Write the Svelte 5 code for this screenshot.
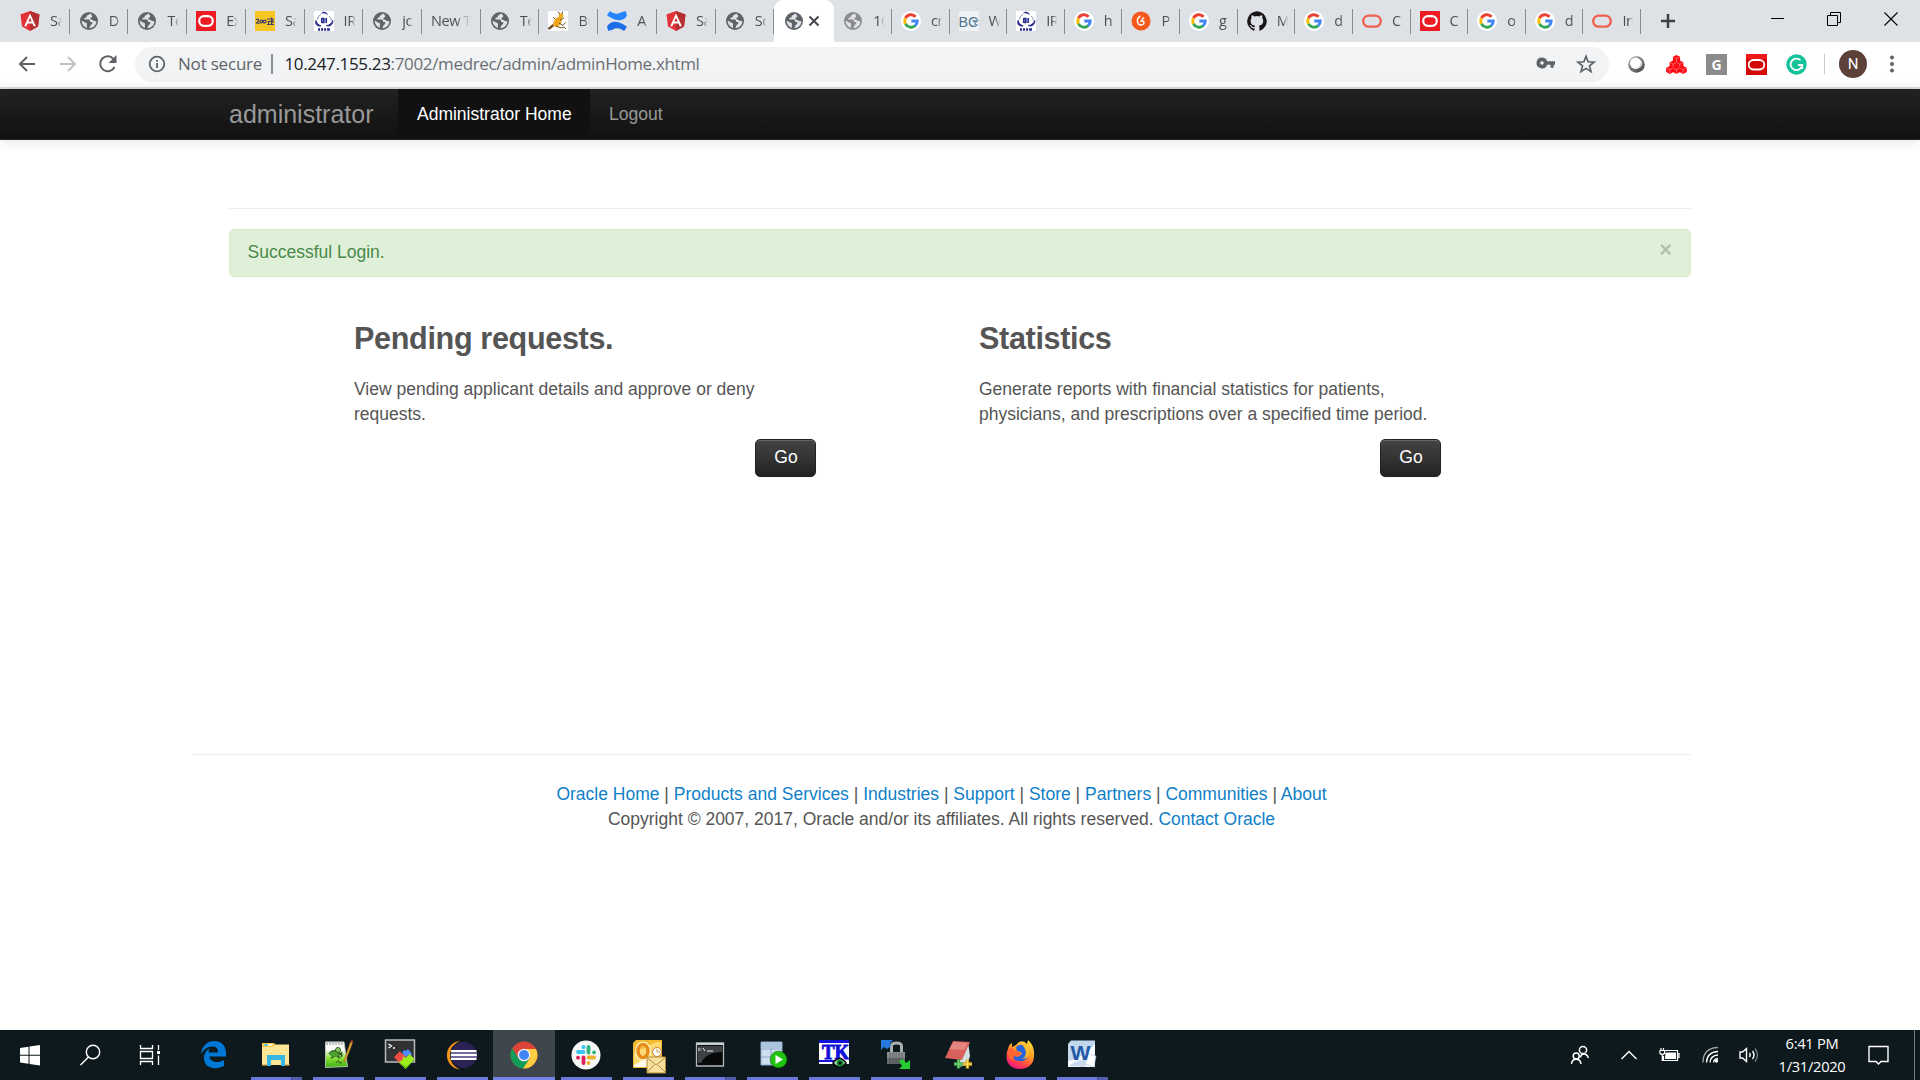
<script>
  const tabs = [
    { icon: 'angular', text: 'Sa' },
    { icon: 'globe', text: 'D' },
    { icon: 'globe', text: 'Te' },
    { icon: 'oracle', text: 'Ex' },
    { icon: 'yellow', text: 'Sa' },
    { icon: 'irctc', text: 'IR' },
    { icon: 'globe', text: 'jc' },
    { icon: '', text: 'New T' },
    { icon: 'globe', text: 'Te' },
    { icon: 'bug', text: 'Bu' },
    { icon: 'confluence', text: 'A' },
    { icon: 'angular', text: 'Sa' },
    { icon: 'globe', text: 'So' }
  ];
  const laterTabs = [
    { icon: 'globeLight', text: '10' },
    { icon: 'google', text: 'cr' },
    { icon: 'bc', text: 'W' },
    { icon: 'irctc', text: 'IR' },
    { icon: 'google', text: 'h' },
    { icon: 'orange', text: 'P' },
    { icon: 'google', text: 'g' },
    { icon: 'github', text: 'M' },
    { icon: 'google', text: 'd' },
    { icon: 'oval', text: 'C' },
    { icon: 'oracle', text: 'C' },
    { icon: 'google', text: 'o' },
    { icon: 'google', text: 'd' },
    { icon: 'oval', text: 'In' }
  ];
  const apps = [
    { icon: 'edge', run: '' },
    { icon: 'explorer', run: 'multi' },
    { icon: 'npp', run: 'one' },
    { icon: 'moba', run: 'one' },
    { icon: 'eclipse', run: 'one' },
    { icon: 'chrome', run: 'active' },
    { icon: 'slack', run: 'one' },
    { icon: 'outlook', run: 'one' },
    { icon: 'cmd', run: 'multi' },
    { icon: 'sqldev', run: 'one' },
    { icon: 'tk', run: 'one' },
    { icon: 'winscp', run: 'one' },
    { icon: 'notes', run: 'one' },
    { icon: 'firefox', run: 'one' },
    { icon: 'word', run: 'multi' }
  ];
  const links = ['Oracle Home', 'Products and Services', 'Industries', 'Support', 'Store', 'Partners', 'Communities', 'About'];
  const cubes = [[10.5, 1], [7.2, 6.4], [13.8, 6.4], [3.8, 12], [10.5, 12], [17.2, 12]];
</script>

{#snippet globe(color)}
  <circle cx="10" cy="10" r="9" fill={color} />
  <path d="M10.800 2.600c-.3 1.500-1.700 1.300-2.600 1.900-.8.500-.2 1.600-1 2-.7.400-1.500.2-1.900.9-.3.700.4 1.200 1.100 1.200h3.300c1 0 1.300.9 1.300 1.700 0 .9.900.6 1.700.8.900.3.800 1.200.2 1.800-.5.600-1.400.9-1.600 1.900-.2.900-.5 1.800-1.300 2.400 4.100 0 7.300-3.100 7.400-7l-2.200-.1c-.6-.1-.9-.9-1.500-1.200-.7-.3-1.900-.1-2.300-.9-.4-.9.600-1.400 1.300-1.800.6-.3.600-1.300.2-2-.6-.9-1.300-1.300-2.100-1.600zM2.700 9.700c0 3.200 2.100 6.100 5.200 7.100.4-.7-.2-1.600-.1-2.400.1-.8.500-1.400.1-2-.6-.9-1.600-.8-2.400-1.200-.8-.5-1.500-1.300-2.800-1.500z" fill="#dee1e6" />
{/snippet}

{#snippet favicon(name)}
  <svg class="favicon" viewBox="0 0 20 20" width="20" height="20">
    {#if name === 'angular'}
      <path d="M10 0 19.500 3.400 18 15.500 10 20 2 15.500.5 3.400z" fill="#e23237" />
      <path d="M10 0 19.500 3.400 18 15.500 10 20z" fill="#b52e31" />
      <path d="M10 2.500 4.200 15.300h2.200l1.200-2.900h4.900l1.200 2.900h2.200zM10 6.700l1.700 3.900H8.300z" fill="#fff" fill-rule="evenodd" />
    {:else if name === 'globe'}
      {@render globe('#5f6368')}
    {:else if name === 'globeLight'}
      {@render globe('#8b8b8b')}
    {:else if name === 'oracle'}
      <rect width="20" height="20" fill="#ed1c24" />
      <rect x="3.200" y="5.200" width="13.600" height="9.600" rx="4.800" fill="none" stroke="#fff" stroke-width="2.200" />
    {:else if name === 'yellow'}
      <rect width="20" height="20" fill="#f6c624" />
      <g fill="none" stroke="#45426a" stroke-width="1.200"><path d="M1 8.500q2.500-1 2.500.5T1.500 12q2 1 3-.5" /><circle cx="6.300" cy="10.500" r="1.400" /><circle cx="9.600" cy="10.500" r="1.400" /><path d="M12 8h6.500M12.500 10.500h5M12 13.500h7M13.500 10.500v3M16.500 6.500v7M18 8v4" /></g>
    {:else if name === 'irctc'}
      <rect width="20" height="20" fill="#fff" />
      <path d="M7 2.500C8.500-.3 13.500 0 13.700 4.500 12.300 2.500 10 1.800 7 2.500z" fill="#2b2e8c" />
      <path d="M2 9.500C.8 13.500 3.500 15.800 7 14.800 4.500 14 2.700 12.300 2 9.500zM18.800 9.500c.3 4.500-3.300 6.500-6.500 5 3 0 5.300-2 6.500-5z" fill="#2b2e8c" stroke="#2b2e8c" />
      <g fill="none" stroke="#2b2e8c"><path d="M7 3.500Q3.800 4.500 3.500 8.500M15 5q2.300 1.500 2.300 4.500" stroke="#8a90bd" /><path d="M7.800 7v5M8 7.500h1.800v4H8M12.200 7v5" stroke-width="1.700" /><path d="M4 18.500h2m1 0h2m1 0h2m1 0h3" stroke-width="2.500" /></g>
    {:else if name === 'bug'}
      <rect width="20" height="20" fill="#fff" />
      <path d="m.5 18 5-4" stroke="#6e4a1f" stroke-width="2.300" /><ellipse cx="9.500" cy="11" rx="3.600" ry="5.500" transform="rotate(35 9.500 11)" fill="#f0a51a" /><circle cx="13" cy="5" r="2.400" fill="#eda91c" /><path d="M12 3 10 .5M14 3l.5-2.500M12 9l4-2M11 12l4 2.500 2.500-3M7 8 5 6M8 15l5 2 3-1M16 16l2 2" stroke="#6d5325" stroke-width="1" fill="none" />
    {:else if name === 'confluence'}
      <path d="M0 4.300 2.500.5Q3 .1 3.700.5 9 4.500 14.500 1.300L18 .3Q18.800.1 19 .8L20 4.500Q17.500 9.300 11.500 9.300 6 9 0 4.300z" fill="#2684ff" /><path d="M20 15.700l-2.500 3.800q-.5.400-1.200 0Q11 15.500 5.500 18.700L2 19.700q-.8.200-1-.5L0 15.500q2.500-4.800 8.500-4.800 5.500.3 11.500 5z" fill="#1b6ee6" />
    {:else if name === 'google'}
      <circle cx="10" cy="10" r="10" fill="#fff" />
      <g fill="none" stroke-width="3"><path d="M14.600 5.700A6.200 6.200 0 0 0 4.500 7.100" stroke="#ea4335" /><path d="M4.500 7.100a6.200 6.200 0 0 0 0 5.800" stroke="#fbbc05" /><path d="M4.500 12.900a6.200 6.200 0 0 0 9.700 1.700" stroke="#34a853" /><path d="M14.200 14.600A6.200 6.200 0 0 0 16.200 10H10.300" stroke="#4285f4" /></g>
    {:else if name === 'bc'}
      <rect width="20" height="20" fill="#eef2f5" />
      <text x="-.5" y="15.500" class="bc" textLength="20" lengthAdjust="spacingAndGlyphs">BC</text><path d="M13 9h7l-2 2.500h-1V14h-1.500v-2.500h-1z" fill="#7b98ac" />
    {:else if name === 'orange'}
      <circle cx="10" cy="10" r="9.500" fill="#f4581c" />
      <path d="M9.500 5C6 6.500 5.500 11 7.500 13s5.500.8 5.500-1.300-3-2.700-3.500-.7M10.500 8.500l2.700-1.800" stroke="#fff" stroke-width="1.500" fill="none" />
    {:else if name === 'github'}
      <path d="M10 .3a10 10 0 0 0-3.200 19.400c.5.100.7-.2.700-.5v-1.900c-2.800.6-3.400-1.200-3.400-1.200-.4-1.100-1.100-1.400-1.100-1.400-.9-.6.100-.6.100-.6 1 .1 1.500 1 1.500 1 .9 1.600 2.400 1.100 2.900.9.100-.7.400-1.100.6-1.400-2.200-.2-4.500-1.100-4.500-4.900 0-1.100.4-2 1-2.700-.1-.2-.4-1.200.1-2.600 0 0 .8-.3 2.700 1a9 9 0 0 1 5 0c1.900-1.300 2.700-1 2.700-1 .5 1.400.2 2.400.1 2.600.6.700 1 1.600 1 2.700 0 3.800-2.300 4.700-4.500 4.900.4.300.7.900.7 1.900v2.700c0 .3.200.6.700.5A10 10 0 0 0 10 .3z" fill="#171515" />
    {:else if name === 'oval'}
      <rect x="1.200" y="4.700" width="17.600" height="11" rx="5.500" fill="none" stroke="#f0624f" stroke-width="2.300" />
    {/if}
  </svg>
{/snippet}

{#snippet appIcon(name)}
  <svg class="app-icon" viewBox="0 0 32 32" width="32" height="32">
    {#if name === 'edge'}
      <path d="M3 15C4 6 10 2 16.500 2 24 2 28 7.500 28 14v3.500H11.500c.2 5.500 8.500 7.300 14.500 3.500v6c-9 4.500-20 2-20-8 0-4.500 2.500-8 6-9.500-1 1.300-1.400 2.500-1.500 4H20c0-3-1-6-5.500-6C9.500 7.500 5.500 10.500 3 15z" fill="#0078d7" />
    {:else if name === 'explorer'}
      <path d="M2 4h12l1.500 2L13 9H2z" fill="#f8c944" /><path d="M4.500 5h8v2h-8z" fill="#fff6d8" /><path d="M4.500 5h3v2h-3z" fill="#3db5e7" /><path d="M2 8h11l2-2.500h14V26H2z" fill="#ffe694" /><path d="M7 16h18v11h-4v-6H11v6H7z" fill="#38b6e8" /><path d="M2 25h5v1.500H2zm23 0h4.500v1.500H25z" fill="#e9c761" />
    {:else if name === 'npp'}
      <defs><linearGradient id="grass" x2="0" y2="1"><stop offset=".3" stop-color="#fafbf7" /><stop offset=".65" stop-color="#84dd32" /><stop offset="1" stop-color="#3eae18" /></linearGradient></defs>
      <path d="M3.500 3h18.500l3.500 24.500-22 1z" fill="url(#grass)" stroke="#ccd8c5" stroke-width=".8" /><path d="M5 2v4m3-4v4m3-4v4m3-4v4m3-4v4m3-4v4" stroke="#a1a1a1" stroke-width="1.300" /><path d="M7 15q4-5 8-2t5 0M8 14q2 4 8 2t3 2M9 19l5-3 4 3" fill="none" stroke="#315c24" stroke-width="1.600" /><ellipse cx="12" cy="15" rx="4.500" ry="2.500" fill="#48a42e" /><circle cx="16" cy="11" r="2.500" fill="#89cd5a" stroke="#315c24" /><path d="M14 24c2-3 3-3 3-1s2 0 3 1" stroke="#29571c" fill="none" /><path d="m21.500 23 7-20 2 1-7 18z" fill="#f2b02e" stroke="#895b1e" stroke-width=".5" /><path d="m28.500 3 .7-2 2 .7-.7 2.300z" fill="#b53a2c" />
    {:else if name === 'moba'}
      <path d="M1.500 1h29v22h-29z" fill="#303234" stroke="#b9bcbd" stroke-width="1.500" /><path d="m4.500 5 3 2-3 2M9 9h2" fill="none" stroke="#fff" stroke-width="1.300" /><path d="m10 18 6-6 2 3 3-1 2 3-3 3 2 3-5 3z" fill="#ee4b43" /><path d="m18 14 2-3 2 1 2-2 4 5-1 2-3-1-2 2-2-2z" fill="#4c8cff" /><path d="m14.500 23 4-2 1-4 2 2 4-4 5 5-9 10z" fill="#9cee1b" /><path d="m14 22 8 8 8-9-8 7z" fill="#54b313" />
    {:else if name === 'eclipse'}
      <path d="M14 2A14.300 14.300 0 0 0 14 30.500Q4 26 4 16T14 2z" fill="#f7941e" /><circle cx="17.700" cy="16" r="13" fill="#2c2255" /><path d="M5 12h25.500M4.800 16h26M5 20h25.500" stroke="#fff" stroke-width="2" /><path d="M5 14h26M5 18h26" stroke="#8e82b8" stroke-width="1.500" />
    {:else if name === 'chrome'}
      <circle cx="16" cy="16" r="13.500" fill="#db4437" /><path d="M4.300 9.250A13.500 13.500 0 0 0 16 29.500L21.700 19.500 10.500 19.500z" fill="#0f9d58" /><path d="M28 10A13.500 13.500 0 0 1 15 29.500L21.700 19.500 16 10z" fill="#ffcd40" /><circle cx="16" cy="16" r="6.300" fill="#f1f1f1" /><circle cx="16" cy="16" r="5" fill="#4285f4" />
    {:else if name === 'slack'}
      <circle cx="16" cy="16" r="14.500" fill="#f6f6f6" /><g fill="none" stroke-width="3.800" stroke-linecap="round"><path d="M8 13h5.500" stroke="#36c5f0" /><path d="M13.500 8v.2" stroke="#36c5f0" /><path d="M18.500 8v5.500M24 13.300h.1" stroke="#2eb67d" /><path d="M18.500 18.500H24M18.500 24v.1" stroke="#ecb22e" /><path d="M13.500 18.500V24M8 18.700h.1" stroke="#e01e5a" /></g>
    {:else if name === 'outlook'}
      <path d="M1 4 4 1h26v28H1z" fill="#f5b930" /><path d="M2 14 24 3h5v23H2z" fill="#fbda72" /><path d="M2 26 13 20h5v8H2z" fill="#fffaf0" /><ellipse cx="11" cy="12" rx="5.500" ry="7" fill="none" stroke="#fff5cb" stroke-width="5" /><ellipse cx="11" cy="12" rx="5" ry="6.500" fill="none" stroke="#e78a16" stroke-width="3.500" /><circle cx="25" cy="13" r="4.500" fill="#fff" stroke="#d47b35" /><path d="M25 10v3h3" fill="none" stroke="#c93" /><path d="M15 18h18.500v16H15z" fill="#f7df9c" stroke="#b28b36" /><path d="m15.500 19 8.700 7 8.700-7M15.500 33l6.500-7m11 7-7-7" fill="none" stroke="#b28b36" />
    {:else if name === 'cmd'}
      <path d="M2.500 4h27v23h-27z" fill="#080909" stroke="#b2b8bb" stroke-width="1.300" /><path d="M2.500 4h27v2h-27z" fill="#c8cfd2" /><path d="M3.500 7h25v6Q12 13 7 24H3.500z" fill="#3e4244" /><path d="M5 9v3m2-3v.5m0 2v.5m2-3 2 3m2 0h6" stroke="#eee" />
    {:else if name === 'sqldev'}
      <path d="M5 3h21v23H5z" fill="#cedff1" stroke="#8ba9c9" /><path d="M5 10h21M5 18h21M15 3v23" stroke="#8ba9c9" /><path d="M5.500 4h9v5h-9zM15.500 4H25v5h-9.500z" fill="#abc4df" /><circle cx="22.500" cy="20.500" r="8.300" fill="#1fc40f" stroke="#187b14" stroke-width=".7" /><path d="m19.500 16 7.500 4.500-7.500 4.500z" fill="#fff" />
    {:else if name === 'tk'}
      <path d="M1 1h30v24H1z" fill="#fff" /><path d="M1 1h30v3H1zM1 21h17v2H1z" fill="#1212d8" /><text x="4" y="20" class="tk" textLength="27" lengthAdjust="spacingAndGlyphs">TK</text><path d="M15 24q7-9 13 0-7 8-13 0z" fill="#b5e9ba" stroke="#050505" stroke-width="1.500" /><circle cx="22" cy="24" r="3.500" fill="#118a32" /><circle cx="22" cy="24" r="1.500" />
    {:else if name === 'winscp'}
      <path d="M11.500 14V7q0-3 5-3t5 3v7" fill="none" stroke="#a9aeb0" stroke-width="3" /><path d="M7 13h18v12H7z" fill="#8b8e8f" /><path d="M7 19h18v6H7z" fill="#636768" /><path d="M10 14v11m3-11v11m3-11v11m3-11v11m3-11v11" stroke="#4e5253" stroke-width=".8" /><path d="M1 1h12l-3 3 1 3-4 3-3-2-3 3z" fill="#2679dd" /><path d="M30 30H19l3-3-3-5 4-2 3 4 4-3z" fill="#26cb31" />
    {:else if name === 'notes'}
      <path d="m26 3-8 16-1 9 8-2 3-9z" fill="#d2dfe1" /><path d="m11 2 17 1-8 18-17-2z" fill="#d9615c" /><path d="m12 3 14 1-4 7-15-1z" fill="#ef9e98" opacity=".6" /><path d="M12 25h9m-4.500-4.500v9" stroke="#40a94d" stroke-width="3.300" /><path d="M12.500 25h8m-4-4v8" stroke="#83d779" /><path d="M21 25h9m-4.500-4.500v9" stroke="#d9a81e" stroke-width="3.300" /><path d="M21.500 25h8m-4-4v8" stroke="#fae766" />
    {:else if name === 'firefox'}
      <defs><linearGradient id="fox" x1=".8" y1="0" x2=".3" y2="1"><stop stop-color="#ffe03d" /><stop offset=".45" stop-color="#ff9525" /><stop offset=".8" stop-color="#ff394f" /><stop offset="1" stop-color="#ed168d" /></linearGradient></defs>
      <path d="M4 10q1-5 4-6v4l4-2 3-3q5-2 8 2l1-4q7 6 6 16c0 8-6 13-14 13S2.500 25 2.500 18c0-3 .5-6 1.500-8z" fill="url(#fox)" /><path d="M12 8c5-5 12-1 12 6 0 6-4 9-9 8-4 0-6-3-6-5l5 1 4-3-1-2-4-1z" fill="#2464df" /><path d="M19 7c4 4 4 11-1 13 8 0 9-9 5-14l-3-3z" fill="#ffbc2e" /><path d="M4 11c3-4 6-1 7 1l5 1q0 4-6 4-2 4 2 6-9-1-8-12z" fill="#ff6533" />
    {:else if name === 'word'}
      <path d="M2 5 5 1.500h24V28H2z" fill="#c2d8ef" /><path d="M2 22Q18 19 29 5v23H2z" fill="#f8fbff" /><path d="M2 27Q15 19 21 20l-2 8z" fill="#c9dced" /><path d="m22 15 8 2-2 11-9-3z" fill="#fff" stroke="#a8c1de" stroke-width=".6" /><text x="4.500" y="21" class="word" textLength="20" lengthAdjust="spacingAndGlyphs">W</text>
    {/if}
  </svg>
{/snippet}

<div class="screen">
  <div class="tabstrip">
    {#each tabs as tab}
      <div class="tab" class:noicon={!tab.icon}>
        {#if tab.icon}{@render favicon(tab.icon)}{/if}
        <span class="tab-text">{tab.text}</span>
      </div>
    {/each}
    <div class="tab active">
      {@render favicon('globe')}
      <svg width="12" height="12" viewBox="0 0 12 12"><path d="m1.500 1.500 9 9m0-9-9 9" stroke="#45494d" stroke-width="2" /></svg>
    </div>
    {#each laterTabs as tab}
      <div class="tab later">
        {@render favicon(tab.icon)}
        <span class="tab-text">{tab.text}</span>
      </div>
    {/each}
    <svg class="plus" width="16" height="16" viewBox="0 0 16 16"><path d="M8 1v14M1 8h14" stroke="#3c4043" stroke-width="2.500" /></svg>
    <div class="window-buttons">
      <svg width="14" height="14" viewBox="0 0 14 14"><path d="M1 6.500h13" stroke="#000" /></svg>
      <svg width="14" height="14" viewBox="0 0 14 14"><path d="M.5 3.500h10v10H.5zM3.500 3V.5h10v10H11" fill="none" stroke="#000" /></svg>
      <svg width="14" height="14" viewBox="0 0 14 14"><path d="m.5.5 13 13m0-13-13 13" stroke="#000" stroke-width="1.100" /></svg>
    </div>
  </div>

  <div class="toolbar">
    <svg class="back" width="18" height="18" viewBox="0 0 18 18"><path d="M17 9H2m7-7L2 9l7 7" fill="none" stroke="#5f6368" stroke-width="2" /></svg>
    <svg class="forward" width="18" height="18" viewBox="0 0 18 18"><path d="M1 9h15M9 2l7 7-7 7" fill="none" stroke="#bdc1c6" stroke-width="2" /></svg>
    <svg class="reload" width="20" height="20" viewBox="0 0 20 20"><path d="M16.500 13A7.500 7.500 0 1 1 15.500 5" fill="none" stroke="#5f6368" stroke-width="2" /><path d="M18.500 1v8h-8z" fill="#5f6368" /></svg>
    <div class="omnibox">
      <svg width="18" height="18" viewBox="0 0 18 18"><circle cx="9" cy="9" r="7.300" fill="none" stroke="#5f6368" stroke-width="1.800" /><path d="M9 8v5M9 5v1.800" stroke="#5f6368" stroke-width="1.800" /></svg>
      <span class="insecure">Not secure</span>
      <span class="divider"></span>
      <span class="url"><b>10.247.155.23</b>:7002/medrec/admin/adminHome.xhtml</span>
      <svg class="key" width="20" height="12" viewBox="0 0 20 12"><path d="M6 .5a5.500 5.500 0 1 0 5.200 7.300h3.300v3h3.200v-3h1.300V4.200h-7.800A5.500 5.500 0 0 0 6 .5zm0 3.700a1.800 1.800 0 1 1 0 3.600 1.800 1.800 0 0 1 0-3.600z" fill="#5f6368" fill-rule="evenodd" /></svg>
      <svg width="20" height="20" viewBox="0 0 20 20"><path d="m10 2.300 2.100 5.500 5.900.4-4.500 3.700 1.500 5.700-5-3.200-5 3.200 1.500-5.700L2 8.200l5.900-.4z" fill="none" stroke="#5f6368" stroke-width="1.700" /></svg>
    </div>
    <div class="extensions">
      <svg width="21" height="21" viewBox="0 0 21 21"><defs><linearGradient id="ring" x2="1" y2="1"><stop stop-color="#aaa" /><stop offset="1" stop-color="#404040" /></linearGradient></defs><circle cx="10.500" cy="10.500" r="8.300" fill="url(#ring)" /><circle cx="9.600" cy="9.200" r="5.700" fill="#fff" /><path d="M14.500 5q2 5-3 9.500 5-1 5-6z" fill="#ccc" /></svg>
      <svg width="21" height="21" viewBox="0 0 21 21">
        {#each cubes as [x, y]}
          <path d="M{x} {y}l3.600 1.800v4.200L{x} {y + 8}l-3.600-2V{y + 1.8}z" fill="#ff0a12" /><path d="M{x - 3} {y + 2.200}l3 1.500 3-1.500M{x} {y + 3.700}v3.800" stroke="#ff8c90" stroke-width=".7" fill="none" />
        {/each}
      </svg>
      <svg width="21" height="21" viewBox="0 0 21 21"><path d="M0 0h21v21H0z" fill="#8b8b8b" /><text x="10.500" y="15.500" class="g">G</text></svg>
      <svg width="21" height="21" viewBox="0 0 21 21"><path d="M0 0h21v21H0z" fill="#d50808" /><path d="M0 0h21v5H0z" fill="#f01818" /><rect x="2.700" y="6" width="15.600" height="9.500" rx="4.700" fill="none" stroke="#fff" stroke-width="1.800" /></svg>
      <svg width="21" height="21" viewBox="0 0 21 21"><circle cx="10.500" cy="10.500" r="10.200" fill="#15c39a" /><path d="M14.500 6.200A5.800 5.800 0 1 0 16.200 11H12m4.200 0v4" fill="none" stroke="#fff" stroke-width="1.800" /></svg>
    </div>
    <span class="tool-sep"></span>
    <span class="avatar">N</span>
    <svg class="dots" width="4" height="18" viewBox="0 0 4 18"><circle cx="2" cy="2.500" r="2" fill="#5f6368" /><circle cx="2" cy="9" r="2" fill="#5f6368" /><circle cx="2" cy="15.500" r="2" fill="#5f6368" /></svg>
  </div>

  <nav>
    <span class="brand">administrator</span>
    <span class="nav-item current">Administrator Home</span>
    <span class="nav-item">Logout</span>
  </nav>

  <main>
    <hr class="top-rule" />
    <div class="alert"><span>Successful Login.</span><span class="dismiss">×</span></div>
    <div class="cards">
      <section>
        <h3>Pending requests.</h3>
        <p>View pending applicant details and approve or deny requests.</p>
        <button>Go</button>
      </section>
      <section>
        <h3>Statistics</h3>
        <p>Generate reports with financial statistics for patients, physicians, and prescriptions over a specified time period.</p>
        <button>Go</button>
      </section>
    </div>
    <footer>
      <div>
        {#each links as link, i}{#if i > 0}{' | '}{/if}<span class="link">{link}</span>{/each}
      </div>
      <div>Copyright © 2007, 2017, Oracle and/or its affiliates. All rights reserved. <span class="link">Contact Oracle</span></div>
    </footer>
  </main>

  <div class="taskbar">
    <div class="sys"><svg width="22" height="22" viewBox="0 0 22 22"><path d="m1 4 8.500-1.300v8H1zM10.500 2.500 21 1v9.700H10.500zM1 11.700h8.500v8L1 18.500zM10.500 11.700H21v9.800L10.500 20z" fill="#fff" /></svg></div>
    <div class="sys"><svg width="22" height="22" viewBox="0 0 22 22"><circle cx="14" cy="8" r="6.700" fill="none" stroke="#fff" stroke-width="1.400" /><path d="m9.500 13-8 8" stroke="#fff" stroke-width="1.400" /></svg></div>
    <div class="sys"><svg width="22" height="22" viewBox="0 0 22 22"><path d="M1.500 1v3.500h12V1M1.500 21v-3.500h12V21M1.500 7.500h12v7h-12zM19.500 1v5M19.500 11.500V21" fill="none" stroke="#fff" stroke-width="1.300" /><path d="M18 7h3v3h-3z" fill="#fff" /></svg></div>
    <div class="apps">
      {#each apps as app}
        <div class="app {app.run}">{@render appIcon(app.icon)}</div>
      {/each}
    </div>
    <div class="tray">
      <svg width="20" height="20" viewBox="0 0 20 20"><g fill="none" stroke="#fff" stroke-width="1.500"><circle cx="13" cy="5" r="3.600" /><circle cx="6.200" cy="11" r="3" /><path d="M10.500 12.500Q11 9 14 9t4.500 4M1.500 19q.5-4.700 4.700-4.700T11 19" /></g></svg>
      <svg class="chev" width="18" height="18" viewBox="0 0 18 18"><path d="m1.500 13 7.500-7.500 7.500 7.500" fill="none" stroke="#fff" stroke-width="1.400" /></svg>
      <svg class="battery" width="21" height="16" viewBox="0 0 21 16"><path d="M6 3.500h12.500v10h-14V9M18.500 6.500H20v4h-1.500M1 3.500h4.500v3q-2.200 2-4.500 0zM2 1v2m2.500-2v2M3.300 8v5.500H5" fill="none" stroke="#fff" stroke-width="1.200" /><path d="M6.500 5.500h10.500v6.500H6z" fill="#fff" /></svg>
      <svg class="wifi" width="18" height="18" viewBox="0 0 18 18"><g fill="none" stroke-width="1.300" stroke="#fff"><path d="M1 16.500Q1 2 16 1.500" opacity=".6" /><path d="M4.500 16.500Q5 6 16 5.500M8 16.500Q8.500 9.500 16 9M11.500 16.500q.5-3.500 4.500-4" /></g><circle cx="14.500" cy="15" r="1.700" fill="#fff" /></svg>
      <svg class="sound" width="21" height="18" viewBox="0 0 21 18"><path d="M1 6h2.500l4-3.500v13l-4-3.500H1zM10.500 7q1.500 2 0 4M13.500 5q3 4 0 8" fill="none" stroke="#fff" stroke-width="1.400" /><path d="M16 2.500q5 6.500 0 13" fill="none" stroke="#748083" stroke-width="1.300" /></svg>
      <div class="clock"><span>6:41 PM</span><span>1/31/2020</span></div>
      <svg class="note" width="21" height="21" viewBox="0 0 21 21"><path d="M1 1.500h19v15h-7L10.500 19 8 16.500H1z" fill="none" stroke="#fff" stroke-width="1.400" /></svg>
    </div>
    <div class="show-desktop"></div>
  </div>
</div>

<style>
  :global(body) { margin: 0; background: #fff; overflow: hidden; }
  .screen { width: 1920px; height: 1080px; display: flex; flex-direction: column; font-family: "Liberation Sans", Arial, sans-serif; font-size: 17.5px; line-height: 25px; color: #555; box-sizing: border-box; }
  svg { display: block; flex: none; }
  .tabstrip { height: 42px; flex: none; background: #dee1e6; display: flex; align-items: center; padding-left: 11px; box-sizing: border-box; }
  .tab { width: 58.720px; height: 25px; flex: none; display: flex; align-items: center; box-sizing: border-box; border-right: 1px solid #888b90; padding-left: 9px; gap: 10px; }
  .tab-text { flex: none; width: 19px; white-space: nowrap; font: 14.500px/20px "Open Sans", "Noto Sans", sans-serif; letter-spacing: -.4px; color: #4c5054; padding-bottom: 1px; -webkit-mask-image: linear-gradient(90deg, #000 35%, transparent 62%); mask-image: linear-gradient(90deg, #000 35%, transparent 62%); }
  .later .tab-text { width: 18px; }
  .tab.noicon { padding-left: 9px; }
  .noicon .tab-text { width: 42px; -webkit-mask-image: linear-gradient(90deg, #000 60%, transparent 95%); mask-image: linear-gradient(90deg, #000 60%, transparent 95%); }
  .tab.active { width: 60px; height: 42px; background: #fff; border: 0; border-radius: 9px 9px 0 0; padding-left: 10px; gap: 4px; }
  .tab.later { width: 57.640px; }
  .plus { margin-left: 19px; }
  .window-buttons { margin-left: auto; display: flex; gap: 43px; padding: 0 22px 5px 0; }
  .toolbar { height: 47px; flex: none; display: flex; align-items: center; padding: 0 26px 1px 18px; border-bottom: 2px solid #d9dbe0; box-sizing: border-box; }
  .forward { margin-left: 23px; }
  .reload { margin-left: 21px; }
  .omnibox { width: 1474px; height: 35px; margin-left: 17px; border-radius: 18px; background: #f1f3f4; display: flex; align-items: center; box-sizing: border-box; padding: 0 13px; flex: none; font: 17px/24px "Open Sans", "Noto Sans", sans-serif; color: #5f6368; }
  .insecure { margin-left: 12px; width: 93px; white-space: nowrap; letter-spacing: -.2px; }
  .divider { width: 1.500px; height: 20px; background: #8b8f94; }
  .url { margin-left: 12px; white-space: nowrap; letter-spacing: -.35px; color: #6b6f73; }
  .url b { font-weight: 400; color: #202124; }
  .key { margin: 0 20px 2px auto; }
  .extensions { display: flex; gap: 19px; margin-left: 17px; }
  .tool-sep { width: 1px; height: 20px; margin-left: 17px; background: #c9ccd1; }
  .avatar { width: 28px; height: 28px; border-radius: 50%; background: #5d4037; color: #fff; margin-left: 14px; text-align: center; font: 15px/28px Roboto, sans-serif; }
  .dots { margin-left: auto; }
  nav { height: 51px; flex: none; display: flex; padding-left: 229px; background: linear-gradient(#222, #111); border-bottom: 1px solid #252525; box-sizing: border-box; box-shadow: 0 1px 12px rgba(0, 0, 0, .12); color: #999; }
  .brand { width: 169px; font-size: 25px; line-height: 51px; }
  .nav-item { padding: 13px 19px 12px; }
  .current { background: #111; color: #fff; width: 154px; white-space: nowrap; }
  main { flex: 1; width: 1499px; margin-left: 192px; }
  hr { border: 0; height: 1px; background: #eee; margin: 0; }
  .top-rule { margin: 68px 0 20px 37px; }
  .alert { display: flex; justify-content: space-between; height: 48px; box-sizing: border-box; border: 1px solid #d6e9c6; border-radius: 5px; background: #dff0d8; margin-left: 37px; padding: 10px 18px 10px 17.5px; color: #468847; text-shadow: 0 1px 0 rgba(255, 255, 255, .5); }
  .dismiss { font-size: 22px; font-weight: 700; color: #000; opacity: .2; line-height: 20px; }
  .cards { display: flex; gap: 163px; padding: 40px 0 0 162px; height: 477px; box-sizing: border-box; }
  section { width: 462px; }
  h3 { margin: 0 0 18px; font-size: 30.600px; line-height: 42px; letter-spacing: -.35px; }
  p { margin: 0 0 12px; }
  button { display: block; width: 61px; height: 38px; margin-left: 401px; border: 1px solid #222; border-radius: 5px; background: linear-gradient(#444, #222); color: #fff; font: 17.5px/25px "Liberation Sans", Arial, sans-serif; padding: 0 0 2px 1px; box-shadow: inset 0 1px 0 rgba(255, 255, 255, .2), 0 1px 2px rgba(0, 0, 0, .05); }
  footer { border-top: 1px solid #eee; padding-top: 27px; text-align: center; }
  .link { color: #0f7fc8; }
  .taskbar { height: 50px; flex: none; background: #0d191d; display: flex; }
  .sys { width: 60px; display: flex; align-items: center; justify-content: center; }
  .apps { display: flex; margin-left: 3px; }
  .app { width: 62px; height: 50px; box-sizing: border-box; display: flex; flex-direction: column; align-items: center; padding-top: 9px; justify-content: space-between; }
  .app-icon { overflow: visible; }
  .app::after { content: ""; width: 51px; height: 3px; }
  .one::after { background: #6c79dc; }
  .multi::after { background: linear-gradient(90deg, #6c79dc 40px, #35407c 40px, #525dab 41px); }
  .active.app { background: #3d464a; }
  .active.app::after { width: 62px; background: #7482ea; }
  .tray { margin-left: auto; display: flex; align-items: center; padding-right: 25px; }
  .chev { margin-left: 30px; }
  .battery { margin-left: 21px; }
  .wifi { margin-left: 22px; }
  .sound { margin-left: 19px; }
  .clock { width: 70px; margin-left: 17px; display: flex; flex-direction: column; text-align: center; font: 14.700px/23px "Open Sans", "Noto Sans", sans-serif; letter-spacing: -.3px; color: #fff; white-space: nowrap; }
  .note { margin-left: 21px; }
  .show-desktop { width: 5px; border-left: 1px solid #727a7d; }
  .bc { font: 15px "Liberation Sans", sans-serif; fill: #52758f; }
  .tk { font: 700 22px "Liberation Serif", serif; fill: #1212d8; stroke: #1212d8; stroke-width: 1px; }
  .word { font: 700 20px "Liberation Sans", sans-serif; fill: #2458a8; }
  .g { font: 700 14px "Open Sans", sans-serif; fill: #fff; text-anchor: middle; }
</style>
